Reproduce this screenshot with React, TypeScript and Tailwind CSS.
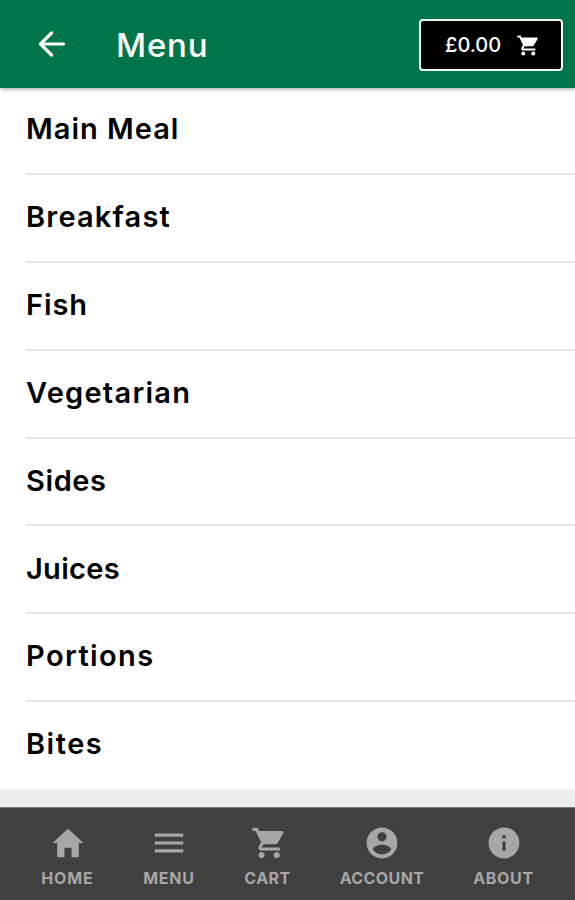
import { useState } from "react";
import {
  IoMdCart,
  IoMdContact,
  IoMdHome,
  IoMdInformationCircle,
  IoMdMenu,
} from "react-icons/io";

const categories = [
  { name: "Main Meal", tracking: "tracking-[1px]" },
  { name: "Breakfast", tracking: "tracking-[1.2px]" },
  { name: "Fish", tracking: "tracking-[0.9px]" },
  { name: "Vegetarian", tracking: "tracking-[1.25px]" },
  { name: "Sides", tracking: "tracking-[0.6px]" },
  { name: "Juices", tracking: "tracking-[0.3px]" },
  { name: "Portions", tracking: "tracking-[1.4px]" },
  { name: "Bites", tracking: "tracking-[1.5px]" },
];

const tabs = [
  { name: "HOME", icon: IoMdHome, className: "w-[103px] tracking-[0.9px]" },
  { name: "MENU", icon: IoMdMenu, className: "w-[100px] tracking-[0.8px]" },
  { name: "CART", icon: IoMdCart, className: "w-[97px] tracking-[0.5px]" },
  { name: "ACCOUNT", icon: IoMdContact, className: "w-[132px] tracking-[0.4px]" },
  { name: "ABOUT", icon: IoMdInformationCircle, className: "w-[111px] tracking-[0.7px]" },
];

function Header() {
  return (
    <header className="relative flex h-[88px] shrink-0 items-center bg-[#007549] pl-[38px] pr-3 text-white shadow-[0_1px_4px_rgba(0,60,35,0.45)]">
      <button aria-label="Back">
        <svg
          width="28"
          height="28"
          viewBox="0 0 28 28"
          fill="none"
          stroke="currentColor"
          strokeWidth="3.2"
          strokeLinecap="round"
          strokeLinejoin="round"
        >
          <path d="M25.5 14H3M13.5 3L2.5 14L13.5 25" />
        </svg>
      </button>
      <h1 className="ml-[50px] mt-[1px] text-[33px] font-medium leading-10 tracking-[0.8px]">
        Menu
      </h1>
      <button className="ml-auto mt-[2px] flex h-[52px] w-[144px] items-center rounded-[4px] border-2 border-[#eef7f0] bg-black pl-[24px]">
        <span className="w-[70px] text-left text-[20px] font-medium">£0.00</span>
        <IoMdCart size={25} />
      </button>
    </header>
  );
}

export default function App() {
  const [selectedTab, setSelectedTab] = useState("MENU");

  return (
    <div className="flex h-[900px] w-full flex-col overflow-hidden bg-[#ecedef] font-['Inter',sans-serif]">
      <Header />
      <ul className="h-[701px] shrink-0 overflow-hidden bg-white pl-[26px]">
        {categories.map((category) => (
          <li
            key={category.name}
            className="flex h-[87.85px] items-center border-b-2 border-[#e4e4e4] pb-[2px] text-[29px] font-[640] text-black first:h-[87px] first:pb-[3px] last:border-white"
          >
            <span className={category.tracking}>{category.name}</span>
          </li>
        ))}
      </ul>
      <nav className="mt-auto flex h-[93px] shrink-0 border-t border-[#777] bg-[#404040] px-4 text-[#a8a6a6]">
        {tabs.map(({ name, icon: Icon, className }) => (
          <button
            key={name}
            aria-current={selectedTab === name}
            onClick={() => setSelectedTab(name)}
            className={`flex shrink-0 flex-col items-center pt-[16px] text-[16px] font-bold ${className}`}
          >
            <Icon size={38} />
            <span className="mt-[4px] leading-6">{name}</span>
          </button>
        ))}
      </nav>
    </div>
  );
}
